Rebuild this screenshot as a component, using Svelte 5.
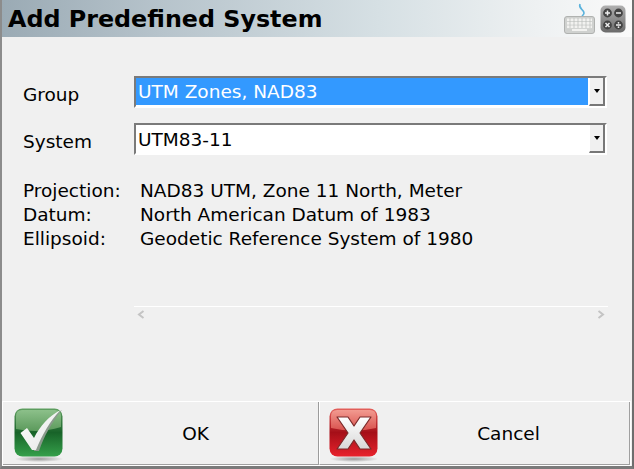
<script>
  const info = [
    ['Projection:', 'NAD83 UTM, Zone 11 North, Meter'],
    ['Datum:', 'North American Datum of 1983'],
    ['Ellipsoid:', 'Geodetic Reference System of 1980']
  ];
</script>

<div class="win">
  <header class="title">
    <h1>Add Predefined System</h1>
    <div class="tools">
      <svg width="31" height="32" viewBox="0 0 31 32">
        <path d="M16 1 C14 6 20 6 20 10 C20 12 18 12 18 14" fill="none" stroke="#5ab2dc" stroke-width="1.6"/>
        <rect x="0.5" y="13.5" width="30" height="17" rx="2.5" fill="#cfd1cf" stroke="#b0b2b0"/>
        <g fill="#f2f2f0">
          <rect x="3" y="15.5" width="25" height="2.6"/>
          <rect x="3" y="19" width="25" height="2.6"/>
          <rect x="3" y="22.5" width="25" height="2.6"/>
          <rect x="8" y="26" width="15" height="2"/>
        </g>
        <path d="M6 15v10M10 15v10M14 15v10M18 15v10M22 15v10M26 15v10" stroke="#b8bab8" stroke-width=".7"/>
      </svg>
      <svg width="26" height="28" viewBox="0 0 26 28">
        <defs>
          <linearGradient id="calc" x1="0" y1="0" x2="0" y2="1">
            <stop offset="0" stop-color="#b0b0b0"/>
            <stop offset="1" stop-color="#6a6a6a"/>
          </linearGradient>
        </defs>
        <rect x="0.5" y="0.5" width="25" height="27" rx="5" fill="url(#calc)"/>
        <g fill="#444">
          <circle cx="7.5" cy="8" r="4.4"/><circle cx="18.5" cy="8" r="4.4"/>
          <circle cx="7.5" cy="20" r="4.4"/><circle cx="18.5" cy="20" r="4.4"/>
        </g>
        <path d="M5 8h5M7.500 5.500v5M16 8h5M5.500 18l4 4M9.500 18l-4 4M16 20h5" stroke="#eee" stroke-width="1.5"/>
        <circle cx="18.500" cy="17.800" r=".9" fill="#eee"/><circle cx="18.500" cy="22.200" r=".9" fill="#eee"/>
      </svg>
    </div>
  </header>

  <main class="body">
    <div class="row group">
      <span class="label">Group</span>
      <div class="combo">
        <div class="value selected">UTM Zones, NAD83</div>
        <div class="arrow"><i></i></div>
      </div>
    </div>
    <div class="row system">
      <span class="label">System</span>
      <div class="combo">
        <div class="value">UTM83-11</div>
        <div class="arrow"><i></i></div>
      </div>
    </div>

    <dl class="info">
      {#each info as [k, v]}
        <dt>{k}</dt><dd>{v}</dd>
      {/each}
    </dl>

    <div class="scroll">
      <svg width="8" height="9" viewBox="0 0 8 9"><path d="M6.500 1 2 4.500 6.500 8" fill="none" stroke="#c4c4c4" stroke-width="2"/></svg>
      <svg width="8" height="9" viewBox="0 0 8 9"><path d="M1.500 1 6 4.500 1.500 8" fill="none" stroke="#c4c4c4" stroke-width="2"/></svg>
    </div>
  </main>

  <footer class="buttons">
    <button class="ok">
      <svg class="icon" width="52" height="56" viewBox="0 0 52 56">
        <defs>
          <linearGradient id="g" x1="0" y1="0" x2="0" y2="1">
            <stop offset="0" stop-color="#5f9f60"/>
            <stop offset=".5" stop-color="#186329"/>
            <stop offset="1" stop-color="#35a04a"/>
          </linearGradient>
          <linearGradient id="gloss" x1="0" y1="0" x2="0" y2="1">
            <stop offset="0" stop-color="#8cc08a"/>
            <stop offset="1" stop-color="#5c9a5c"/>
          </linearGradient>
          <linearGradient id="check" x1="0" y1="0" x2="1" y2="1">
            <stop offset="0" stop-color="#ffffff"/>
            <stop offset="1" stop-color="#e4e4e4"/>
          </linearGradient>
          <radialGradient id="sh"><stop offset="0" stop-color="#9a9a9a"/><stop offset="1" stop-color="#eeeeee"/></radialGradient>
        </defs>
        <ellipse cx="26" cy="52" rx="24" ry="3" fill="url(#sh)"/>
        <rect x="1.500" y="1.500" width="48" height="48" rx="8" fill="url(#g)"/>
        <path d="M3 22 V9 Q3 3 9 3 H42 Q48 3 48 9 V20 Q26 27 3 22 Z" fill="url(#gloss)"/>
        <path d="M21 44 L26 44 C31 29 39 15 49 3 C37 10 29 21 23 34 Z" fill="#8a9a8c"/>
        <path d="M7.500 26 L14 21 L21 31 C27 19 36 9 47.500 3 C37 14 29 28 23 43 L19 43 Z" fill="url(#check)"/>
      </svg>
      <span>OK</span>
    </button>
    <button class="cancel">
      <svg class="icon" width="52" height="56" viewBox="0 0 52 56">
        <defs>
          <linearGradient id="r" x1="0" y1="0" x2="0" y2="1">
            <stop offset="0" stop-color="#e4615c"/>
            <stop offset=".5" stop-color="#a50f18"/>
            <stop offset="1" stop-color="#e8222c"/>
          </linearGradient>
          <linearGradient id="rgloss" x1="0" y1="0" x2="0" y2="1">
            <stop offset="0" stop-color="#f29a90"/>
            <stop offset="1" stop-color="#d9524e"/>
          </linearGradient>
          <linearGradient id="x" x1="0" y1="0" x2="0" y2="1">
            <stop offset="0" stop-color="#ffffff"/>
            <stop offset="1" stop-color="#d8d8d8"/>
          </linearGradient>
        </defs>
        <ellipse cx="26" cy="52" rx="24" ry="3" fill="url(#sh)"/>
        <rect x="1.500" y="1.500" width="48" height="48" rx="8" fill="url(#r)"/>
        <path d="M3 21 V9 Q3 3 9 3 H42 Q48 3 48 9 V21 Q26 26 3 21 Z" fill="url(#rgloss)"/>
        <path d="M9 10 H20 L26 19 L32 10 H43 L32 26 L43 42 H32 L26 33 L20 42 H9 L20 26 Z" fill="url(#x)" stroke="#7a2a2a" stroke-width="1.200" stroke-linejoin="round"/>
      </svg>
      <span>Cancel</span>
    </button>
  </footer>
</div>

<style>
  :global(body) { margin: 0; background: #f0f0f0; }
  .win {
    width: 634px;
    height: 469px;
    box-sizing: border-box;
    display: flex;
    flex-direction: column;
    background: #f0f0f0;
    border-left: 2px solid #8c8c8c;
    border-right: 2px solid #6e6e6e;
    border-bottom: 3px solid #7a7a7a;
    font-family: "DejaVu Sans", sans-serif;
    color: #000;
    overflow: hidden;
  }
  .title {
    height: 37px;
    flex: none;
    margin-left: -2px;
    padding-left: 8px;
    display: flex;
    align-items: center;
    justify-content: space-between;
    background: linear-gradient(90deg, #9aaab4 0%, #b6c3cb 25%, #d6e0e4 60%, #eef1f2 85%, #fafafa 100%);
  }
  h1 {
    margin: 0;
    font-size: 23.800px;
    font-weight: 700;
    line-height: 32px;
  }
  .tools { display: flex; align-items: center; gap: 5px; padding-right: 6px; }
  .tools svg { display: block; }
  .body { flex: 1; padding: 39px 0 0 21px; display: flex; flex-direction: column; }
  .row { display: flex; align-items: center; height: 32px; }
  .system { margin-top: 15px; }
  .label { width: 111px; font-size: 18.500px; padding-top: 5px; }
  .combo {
    width: 473px;
    height: 32px;
    box-sizing: border-box;
    display: flex;
    background: #fff;
    border: 2px solid;
    border-color: #7a7a7a #fff #fff #7a7a7a;
  }
  .value {
    flex: 1;
    font-size: 18.500px;
    line-height: 29px;
    padding-left: 2px;
  }
  .selected { background: #3399ff; color: #fff; margin-bottom: 1px; margin-right: 1px; line-height: 28px; }
  .arrow {
    width: 16px;
    flex: none;
    box-sizing: border-box;
    background: #f0f0f0;
    border-left: 1px solid #fff;
    border-right: 2px solid #777;
    border-bottom: 2px solid #777;
    display: flex;
    align-items: center;
    justify-content: center;
  }
  .arrow i {
    width: 0; height: 0;
    border: 3.500px solid transparent;
    border-top: 4px solid #000;
    border-bottom: 0;
  }
  .info {
    margin: 24px 0 0;
    display: grid;
    grid-template-columns: 117px auto;
    font-size: 18.500px;
    line-height: 24px;
  }
  dd { margin: 0; }
  .scroll {
    margin: 55px 0 0 111px;
    width: 474px;
    height: 14px;
    box-sizing: border-box;
    border-top: 1px solid #fff;
    padding: 3px 3px 0 3px;
    display: flex;
    justify-content: space-between;
  }
  .buttons {
    height: 65px;
    flex: none;
    box-sizing: border-box;
    display: grid;
    grid-template-columns: 316px 1fr;
    border-top: 1px solid #fff;
    border-left: 1px solid #fff;
    border-right: 1px solid #fff;
    border-bottom: 1px solid #fff;
    margin-right: 1px;
  }
  button {
    display: flex;
    align-items: center;
    padding: 0;
    background: #f0f0f0;
    border: 0;
    border-bottom: 1px solid #a0a0a0;
    font: 18.500px "DejaVu Sans", sans-serif;
    color: #000;
  }
  .ok { border-right: 1px solid #9c9c9c; padding-left: 2px; }
  .cancel { border-left: 1px solid #fff; border-right: 1px solid #a0a0a0; }
  .icon { margin: 3px 0 0 8px; flex: none; }
  button span { flex: 1; text-align: center; position: relative; left: 4px; }
</style>
